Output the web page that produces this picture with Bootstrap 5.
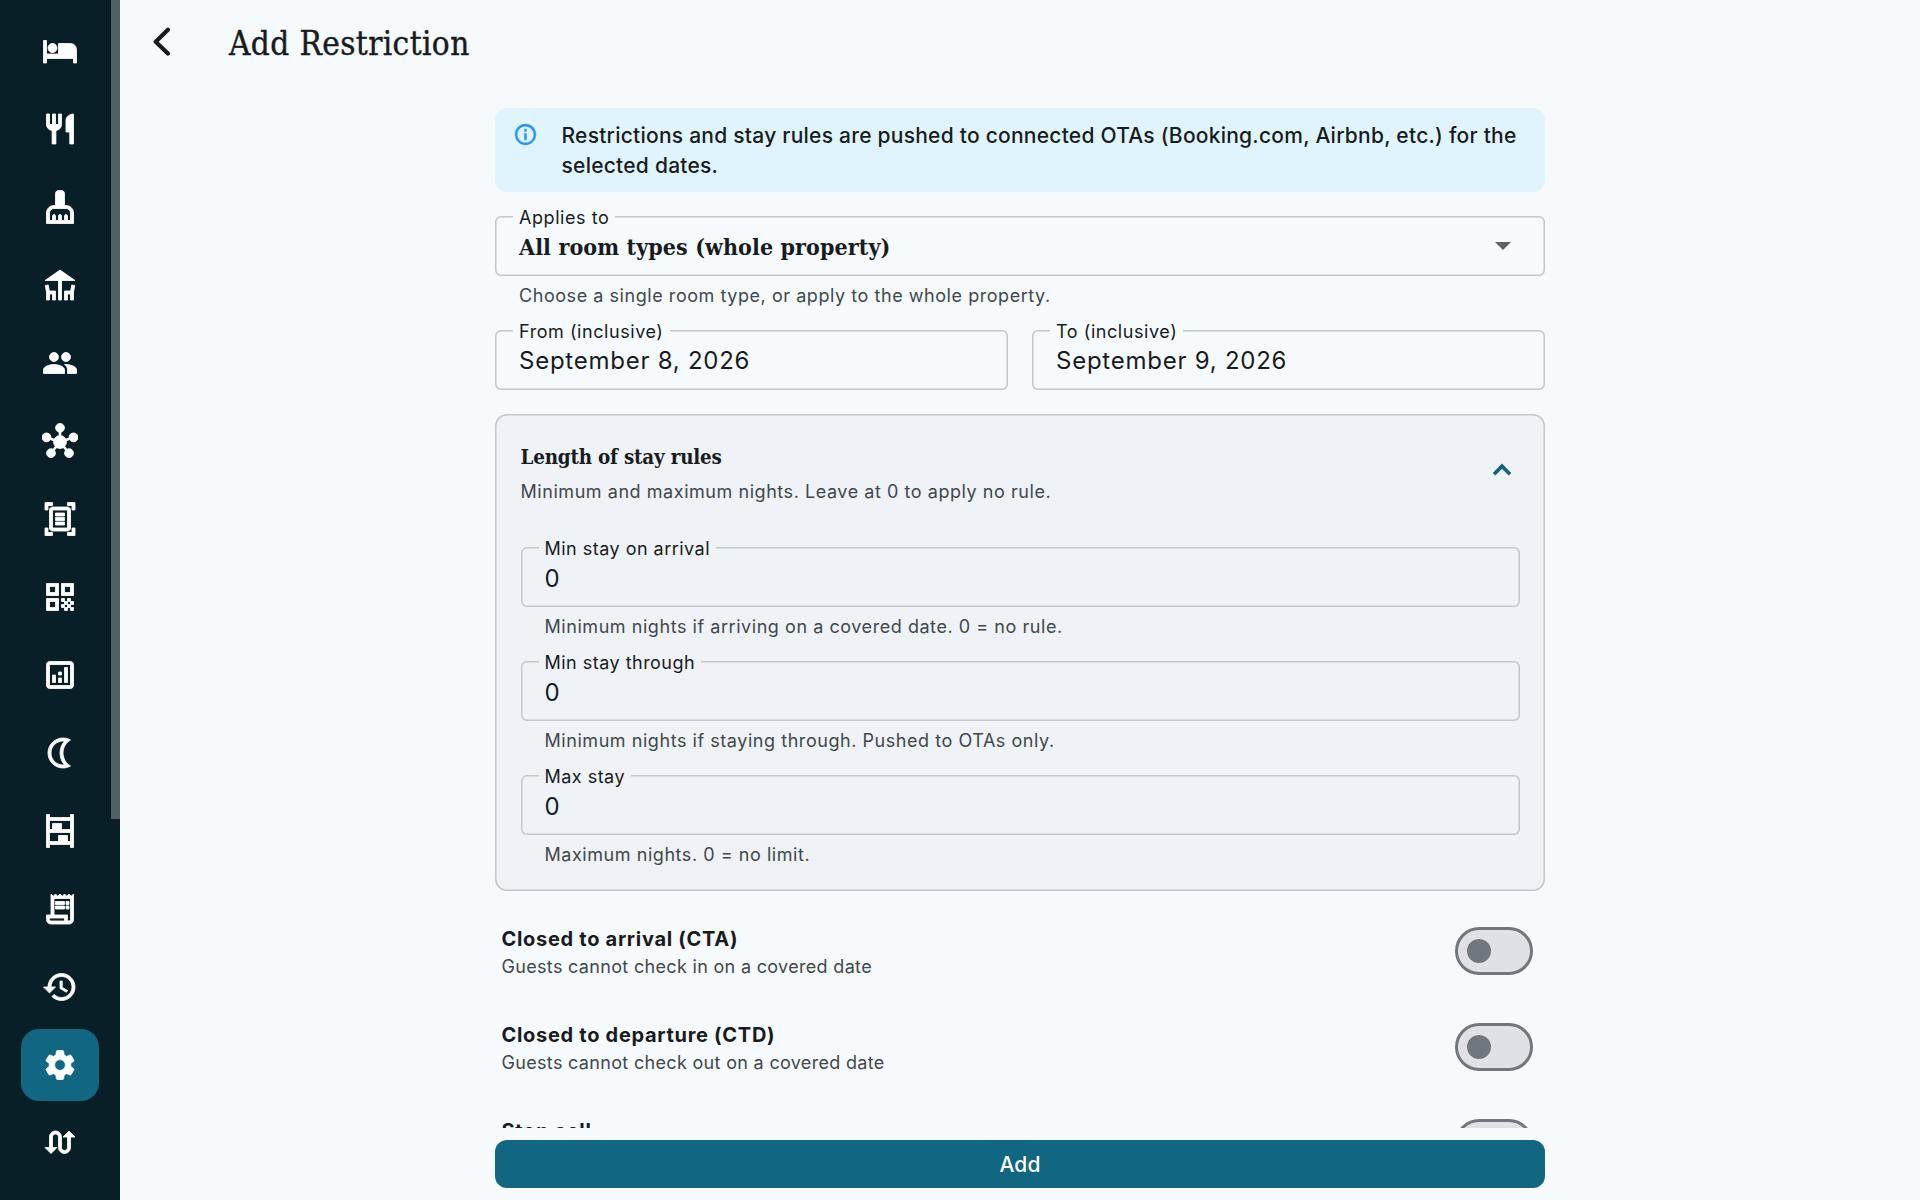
<!DOCTYPE html>
<html lang="en">
<head>
<meta charset="utf-8">
<title>Add Restriction</title>
<meta name="viewport" content="width=device-width, initial-scale=1">
<link rel="stylesheet" href="https://cdn.jsdelivr.net/npm/bootstrap@5.3.0/dist/css/bootstrap.min.css">
<style>
  body { font-family: Inter, "Liberation Sans", sans-serif; background: #f6fafd; color: #181c1f; }
  .shell { height: 1200px; }
  .rail { width: 120px; background: #081f27; padding: 15px 0 0; gap: 6px; }
  .rail-link { width: 78px; height: 72px; border-radius: 18px; color: #fff; }
  .rail-link.selected { background: #116682; }
  .rail-link svg { width: 36px; height: 36px; fill: currentColor; stroke: currentColor; stroke-width: .55; }
  .rail-link .spokes { fill: none; stroke-width: 1.7; }
  .rail-thumb { width: 9px; height: 819px; background: #535f65; }
  .slab { font-family: "Roboto Slab", "DejaVu Serif Condensed", "DejaVu Serif", serif; font-stretch: condensed; }
  .page-title { font-size: 33px; line-height: 40px; letter-spacing: .4px; font-weight: 400; -webkit-text-stroke: .4px #181c1f; }
  .topbar { height: 108px; padding: 24px 0 0 33px; gap: 56px; }
  .form-col { width: 1050px; margin-left: 375px; }
  .scroll-area { height: 1020px; }
  .notice { background: #e0f4fe; border-radius: 12px; padding: 13px 18px 0; height: 84px; margin-bottom: 24px; gap: 24px; font-size: 21px; line-height: 30px; font-weight: 500; letter-spacing: .24px; }
  .notice-icon { margin: 1px 0 0 -.5px; }
  .outlined { height: 60px; border-radius: 6px; box-shadow: inset 0 0 0 1.5px #c0c7cd; padding: 16px 24px 0; font-size: 24px; line-height: 30px; letter-spacing: .75px; }
  .outlined-label { left: 18px; top: -7px; padding: 0 6px; background: #f6fafd; font-size: 18px; line-height: 18px; letter-spacing: .56px; }
  .choice { font-size: 23px; letter-spacing: .1px; }
  .choice-caret { margin: 10px 10px 0 0; }
  .hint { padding: 0 24px; margin-top: 8px; }
  .muted { font-size: 18px; line-height: 24px; letter-spacing: .55px; color: #40484c; }
  .date-row { margin-top: 22px; }
  .rules { background: #eff2f7; border-radius: 12px; box-shadow: inset 0 0 0 1.5px #c0c7cd; height: 477px; padding: 30px 25.5px 0; margin-top: 24px; }
  .rules-title { font-size: 20.4px; line-height: 26px; letter-spacing: -.2px; }
  .rules-intro { margin-top: 10px; }
  .rules-chevron { margin: 19px 8px 0 0; }
  .rules-fields { margin-top: 43px; }
  .rules .outlined { padding-top: 17px; }
  .rules .outlined-label { background: #eff2f7; letter-spacing: .48px; }
  .field + .field { margin-top: 22px; }
  .flags { padding-top: 12px; }
  .flag { height: 96px; padding: 0 12px 0 6.5px; }
  .flag-name { font-size: 20px; line-height: 32px; font-weight: 700; letter-spacing: .7px; }
  .flag .muted { letter-spacing: .32px; }
  .toggle { width: 78px; height: 48px; border: 3px solid #70787d; border-radius: 24px; background: #dee1e6; padding-left: 9px; }
  .toggle-knob { width: 24px; height: 24px; border-radius: 50%; background: #70787d; }
  .btn-add, .btn-add:hover { height: 48px; margin-top: 12px; padding: 2px 0 0; border-radius: 12px; background: #116682; color: #fff; font-size: 21px; font-weight: 500; letter-spacing: .15px; line-height: 30px; border: 0; }
</style>
</head>
<body>
<div class="shell d-flex overflow-hidden">
  <nav class="rail position-relative d-flex flex-column align-items-center flex-shrink-0">
    <div class="rail-thumb position-absolute top-0 end-0"></div>
    <a class="rail-link d-flex align-items-center justify-content-center"><svg viewBox="0 0 24 24"><path d="M7 13c1.660 0 3-1.340 3-3S8.660 7 7 7s-3 1.340-3 3 1.340 3 3 3zm12-6h-8v7H3V5H1v15h2v-3h18v3h2v-9c0-2.210-1.790-4-4-4z"/></svg></a>
    <a class="rail-link d-flex align-items-center justify-content-center"><svg viewBox="0 0 24 24"><path d="M11 9H9V2H7v7H5V2H3v7c0 2.120 1.660 3.840 3.750 3.970V22h2.500v-9.030C11.340 12.840 13 11.120 13 9V2h-2v7zm5-3v8h2.500v8H21V2c-2.760 0-5 2.240-5 4z"/></svg></a>
    <a class="rail-link d-flex align-items-center justify-content-center"><svg viewBox="0 0 24 24"><path d="M16 11h-1V3c0-1.100-.9-2-2-2h-2c-1.100 0-2 .9-2 2v8H8c-2.760 0-5 2.240-5 5v7h18v-7c0-2.760-2.240-5-5-5zm3 10h-2v-3c0-.55-.45-1-1-1s-1 .45-1 1v3h-2v-3c0-.55-.45-1-1-1s-1 .45-1 1v3H9v-3c0-.55-.45-1-1-1s-1 .45-1 1v3H5v-5c0-1.650 1.350-3 3-3h8c1.650 0 3 1.350 3 3v5z"/></svg></a>
    <a class="rail-link d-flex align-items-center justify-content-center"><svg viewBox="0 0 24 24"><path d="M22 9L12 2 2 9h9v13h2V9zM4.140 12l-1.960.37.82 4.370V22h2l.02-4H7v4h2v-6H4.900zM19.100 16H15v6h2v-4h1.980l.02 4h2v-5.260l.82-4.370-1.960-.37z"/></svg></a>
    <a class="rail-link d-flex align-items-center justify-content-center"><svg viewBox="0 0 24 24"><path d="M16 11c1.660 0 2.990-1.340 2.990-3S17.660 5 16 5s-3 1.340-3 3 1.340 3 3 3zm-8 0c1.660 0 2.990-1.340 2.990-3S9.660 5 8 5 5 6.340 5 8s1.340 3 3 3zm0 2c-2.330 0-7 1.170-7 3.500V19h14v-2.500c0-2.330-4.670-3.500-7-3.500zm8 0c-.29 0-.62.02-.97.05 1.160.84 1.970 1.970 1.970 3.450V19h6v-2.500c0-2.330-4.670-3.500-7-3.500z"/></svg></a>
    <a class="rail-link d-flex align-items-center justify-content-center"><svg viewBox="0 0 24 24"><circle cx="12" cy="12.700" r="4.300"/><circle cx="12" cy="3.200" r="2.950"/><circle cx="3" cy="9.600" r="2.950"/><circle cx="21" cy="9.600" r="2.950"/><circle cx="6" cy="20.100" r="2.950"/><circle cx="18" cy="20.100" r="2.950"/><path class="spokes" d="M12 3.200v9.500M3 9.600l9 3.100 9-3.100M6 20.100l6-7.400 6 7.400"/></svg></a>
    <a class="rail-link d-flex align-items-center justify-content-center"><svg viewBox="0 0 24 24"><path d="M7 3H4v3H2V1h5v2zm15 3V1h-5v2h3v3h2zM7 21H4v-3H2v5h5v-2zm13-3v3h-3v2h5v-5h-2zm-1 0c0 1.100-.9 2-2 2H7c-1.100 0-2-.9-2-2V6c0-1.100.9-2 2-2h10c1.100 0 2 .9 2 2v12zM17 6H7v12h10V6zm-2 2H9v2h6V8zm0 3H9v2h6v-2zm0 3H9v2h6v-2z"/></svg></a>
    <a class="rail-link d-flex align-items-center justify-content-center"><svg viewBox="0 0 24 24"><path d="M3 11h8V3H3v8zm2-6h4v4H5V5zM3 21h8v-8H3v8zm2-6h4v4H5v-4zM13 3v8h8V3h-8zm6 6h-4V5h4v4zM19 19h2v2h-2zM13 13h2v2h-2zM15 15h2v2h-2zM13 17h2v2h-2zM15 19h2v2h-2zM17 17h2v2h-2zM17 13h2v2h-2zM19 15h2v2h-2z"/></svg></a>
    <a class="rail-link d-flex align-items-center justify-content-center"><svg viewBox="0 0 24 24"><path d="M19 3H5c-1.100 0-2 .9-2 2v14c0 1.100.9 2 2 2h14c1.100 0 2-.9 2-2V5c0-1.100-.9-2-2-2zm0 16H5V5h14v14zM7 12h2v5H7zM15 7h2v10h-2zM11 14h2v3h-2zM11 10h2v2h-2z"/></svg></a>
    <a class="rail-link d-flex align-items-center justify-content-center"><svg viewBox="0 0 24 24"><path d="M14 2c1.820 0 3.530.5 5 1.350-2.990 1.730-5 4.950-5 8.650s2.010 6.920 5 8.650C17.530 21.500 15.820 22 14 22 8.480 22 4 17.520 4 12S8.480 2 14 2zM14 4c-4.410 0-8 3.590-8 8s3.590 8 8 8c.34 0 .68-.02 1.010-.07C13.100 17.770 12 14.950 12 12s1.100-5.770 3.010-7.930C14.680 4.020 14.340 4 14 4z"/></svg></a>
    <a class="rail-link d-flex align-items-center justify-content-center"><svg viewBox="0 0 24 24"><path d="M3 1h2v2h14V1h2v22h-2v-2H5v2H3zM5 5v6h2V7h6v4h6V5zM5 13v6h6v-4h6v4h2v-6z"/></svg></a>
    <a class="rail-link d-flex align-items-center justify-content-center"><svg viewBox="0 0 24 24"><path d="M19.500 3.500L18 2l-1.500 1.500L15 2l-1.500 1.500L12 2l-1.500 1.500L9 2 7.500 3.500 6 2v14H3v3c0 1.660 1.340 3 3 3h12c1.660 0 3-1.340 3-3V2l-1.500 1.500zM15 20H6c-.55 0-1-.45-1-1v-1h10v2zm4-1c0 .55-.45 1-1 1s-1-.45-1-1v-3H8V5h11v14zM9 7h6v2H9zM16 7h2v2h-2zM9 10h6v2H9zM16 10h2v2h-2z"/></svg></a>
    <a class="rail-link d-flex align-items-center justify-content-center"><svg viewBox="0 0 24 24"><path d="M13 3c-4.970 0-9 4.030-9 9H1l3.890 3.890.07.14L9 12H6c0-3.870 3.130-7 7-7s7 3.130 7 7-3.130 7-7 7c-1.930 0-3.680-.79-4.940-2.060l-1.420 1.420C8.270 19.990 10.510 21 13 21c4.970 0 9-4.030 9-9s-4.030-9-9-9zm-1 5v5l4.280 2.540.72-1.210-3.500-2.080V8H12z"/></svg></a>
    <a class="rail-link selected d-flex align-items-center justify-content-center"><svg viewBox="0 0 24 24"><path d="M19.140 12.940c.04-.3.06-.61.06-.94 0-.32-.02-.64-.07-.94l2.030-1.580c.18-.14.23-.41.12-.61l-1.920-3.320c-.12-.22-.37-.29-.59-.22l-2.390.96c-.5-.38-1.030-.7-1.620-.94l-.36-2.540c-.04-.24-.24-.41-.48-.41h-3.840c-.24 0-.43.17-.47.41l-.36 2.540c-.59.24-1.130.57-1.620.94l-2.390-.96c-.22-.08-.47 0-.59.22L2.740 8.870c-.12.21-.08.47.12.61l2.030 1.580c-.05.3-.09.63-.09.94s.02.64.07.94l-2.030 1.580c-.18.14-.23.41-.12.61l1.920 3.320c.12.22.37.29.59.22l2.390-.96c.5.38 1.030.7 1.620.94l.36 2.540c.05.24.24.41.48.41h3.840c.24 0 .44-.17.47-.41l.36-2.540c.59-.24 1.130-.56 1.620-.94l2.390.96c.22.08.47 0 .59-.22l1.920-3.320c.12-.22.07-.47-.12-.61l-2.010-1.580zM12 15.600c-1.980 0-3.600-1.620-3.600-3.600s1.620-3.600 3.600-3.600 3.600 1.620 3.600 3.600-1.620 3.600-3.600 3.600z"/></svg></a>
    <a class="rail-link d-flex align-items-center justify-content-center"><svg viewBox="0 0 24 24"><path d="M18 4l-4 4h3v7c0 1.100-.9 2-2 2s-2-.9-2-2V8c0-2.210-1.790-4-4-4S5 5.790 5 8v7H2l4 4 4-4H7V8c0-1.100.9-2 2-2s2 .9 2 2v7c0 2.210 1.790 4 4 4s4-1.790 4-4V8h3l-4-4z"/></svg></a>
  </nav>

  <main class="flex-grow-1 d-flex flex-column">
    <header class="topbar d-flex align-items-start flex-shrink-0">
      <svg width="20" height="36" viewBox="0 0 20 36" fill="none" stroke="#181c1f" stroke-width="4.200" stroke-linecap="round" stroke-linejoin="round"><path d="M14.900 5.800L2.700 17.700l12.200 11.900"/></svg>
      <h1 class="page-title slab mb-0">Add Restriction</h1>
    </header>

    <div class="form-col d-flex flex-column">
      <div class="scroll-area overflow-hidden">
        <div class="notice d-flex">
          <svg class="notice-icon flex-shrink-0" width="25" height="25" viewBox="0 0 24 24" fill="#2196f3" stroke="#2196f3" stroke-width=".4"><path d="M11 7h2v2h-2zM11 11h2v6h-2zM12 2C6.480 2 2 6.480 2 12s4.480 10 10 10 10-4.480 10-10S17.520 2 12 2zm0 18c-4.410 0-8-3.590-8-8s3.590-8 8-8 8 3.590 8 8-3.590 8-8 8z"/></svg>
          <div>Restrictions and stay rules are pushed to connected OTAs (Booking.com, Airbnb, etc.) for the selected dates.</div>
        </div>

        <div class="field">
          <div class="outlined position-relative d-flex justify-content-between">
            <span class="outlined-label position-absolute">Applies to</span>
            <span class="choice slab fw-bold">All room types (whole property)</span>
            <svg class="choice-caret" width="16" height="8" viewBox="0 0 16 8" fill="#616161"><path d="M0 0h16L8 8z"/></svg>
          </div>
          <div class="hint muted">Choose a single room type, or apply to the whole property.</div>
        </div>

        <div class="date-row d-flex gap-4">
          <div class="outlined position-relative flex-fill"><span class="outlined-label position-absolute">From (inclusive)</span>September 8, 2026</div>
          <div class="outlined position-relative flex-fill"><span class="outlined-label position-absolute">To (inclusive)</span>September 9, 2026</div>
        </div>

        <section class="rules">
          <div class="d-flex justify-content-between">
            <div>
              <div class="rules-title slab fw-bold">Length of stay rules</div>
              <div class="rules-intro muted">Minimum and maximum nights. Leave at 0 to apply no rule.</div>
            </div>
            <svg class="rules-chevron" width="20" height="14" viewBox="0 0 20 14" fill="none" stroke="#116682" stroke-width="3.700"><path d="M2 11.200l8-8 8 8"/></svg>
          </div>
          <div class="rules-fields">
            <div class="field">
              <div class="outlined position-relative"><span class="outlined-label position-absolute">Min stay on arrival</span>0</div>
              <div class="hint muted">Minimum nights if arriving on a covered date. 0 = no rule.</div>
            </div>
            <div class="field">
              <div class="outlined position-relative"><span class="outlined-label position-absolute">Min stay through</span>0</div>
              <div class="hint muted">Minimum nights if staying through. Pushed to OTAs only.</div>
            </div>
            <div class="field">
              <div class="outlined position-relative"><span class="outlined-label position-absolute">Max stay</span>0</div>
              <div class="hint muted">Maximum nights. 0 = no limit.</div>
            </div>
          </div>
        </section>

        <div class="flags">
          <div class="flag d-flex align-items-center justify-content-between">
            <div><div class="flag-name">Closed to arrival (CTA)</div><div class="muted">Guests cannot check in on a covered date</div></div>
            <div class="toggle d-flex align-items-center"><div class="toggle-knob"></div></div>
          </div>
          <div class="flag d-flex align-items-center justify-content-between">
            <div><div class="flag-name">Closed to departure (CTD)</div><div class="muted">Guests cannot check out on a covered date</div></div>
            <div class="toggle d-flex align-items-center"><div class="toggle-knob"></div></div>
          </div>
          <div class="flag d-flex align-items-center justify-content-between">
            <div><div class="flag-name">Stop sell</div><div class="muted">&nbsp;</div></div>
            <div class="toggle d-flex align-items-center"><div class="toggle-knob"></div></div>
          </div>
        </div>
      </div>
      <button class="btn btn-add w-100">Add</button>
    </div>
  </main>
</div>
<script src="https://cdn.jsdelivr.net/npm/bootstrap@5.3.0/dist/js/bootstrap.bundle.min.js"></script>
</body>
</html>
